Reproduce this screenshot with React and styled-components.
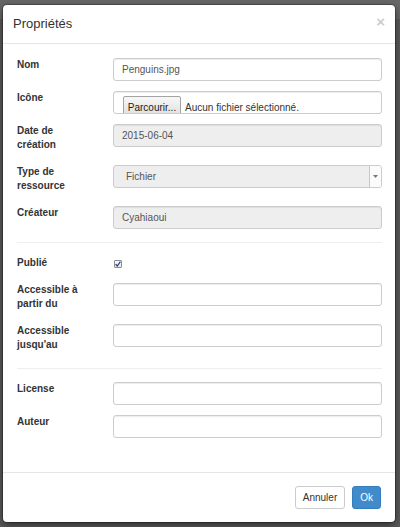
import React, { useState } from "react";
import styled, { createGlobalStyle } from "styled-components";

const GlobalStyle = createGlobalStyle`
  html, body {
    margin: 0;
    padding: 0;
  }
  body {
    background: #5a5a5a;
    font-family: "Liberation Sans", Arial, Helvetica, sans-serif;
  }
  * {
    box-sizing: border-box;
  }
`;

const Backdrop = styled.div`
  min-height: 527px;
  padding: 5px 0 0 3px;
  background: linear-gradient(#676767 0, #676767 19px, #5a5a5a 19px);
`;

const Modal = styled.div`
  width: 392px;
  background: #fff;
  border-radius: 4px;
  box-shadow: 0 0 0 1px rgba(0, 0, 0, 0.25), 0 3px 9px rgba(0, 0, 0, 0.5);
`;

const Header = styled.div`
  height: 39px;
  display: flex;
  align-items: center;
  justify-content: space-between;
  padding: 0 10px 0 10px;
  border-bottom: 1px solid #e5e5e5;
`;

const Title = styled.h4`
  margin: 0;
  font-size: 13px;
  font-weight: normal;
  line-height: 14px;
  color: #333;
`;

const Close = styled.button`
  margin-bottom: 6px;
  padding: 0;
  border: 0;
  background: none;
  font-family: inherit;
  font-size: 15px;
  font-weight: bold;
  line-height: 1;
  color: #000;
  opacity: 0.2;
  cursor: pointer;
`;

const Body = styled.div`
  padding: 14px 13px 34px 14px;
`;

const Section = styled.div`
  display: flex;
  flex-direction: column;
  gap: 10px;
`;

const Divider = styled.hr`
  margin: 13px 0;
  border: 0;
  border-top: 1px solid #eee;
`;

const Row = styled.div`
  display: grid;
  grid-template-columns: 96px 1fr;
  align-items: start;
`;

const Label = styled.label`
  font-size: 10px;
  font-weight: bold;
  line-height: 14px;
  padding-bottom: 3px;
  color: #333;
`;

const Input = styled.input`
  display: block;
  width: 100%;
  height: 23px;
  margin: 0;
  padding: 0 8px;
  font-family: inherit;
  font-size: 10px;
  color: #555;
  background: ${(p) => (p.disabled ? "#eee" : "#fff")};
  border: 1px solid #ccc;
  border-radius: 3px;
  box-shadow: inset 0 1px 1px rgba(0, 0, 0, 0.075);
  outline: none;
`;

const FileControl = styled.div`
  height: 23px;
  display: flex;
  align-items: flex-start;
  gap: 4px;
  padding: 4px 0 0 9px;
  overflow: hidden;
  border: 1px solid #ccc;
  border-radius: 3px;
  box-shadow: inset 0 1px 1px rgba(0, 0, 0, 0.075);
`;

const FileButton = styled.span`
  flex: 0 0 58px;
  height: 22px;
  padding-top: 5px;
  text-align: center;
  font-size: 10px;
  line-height: 12px;
  color: #222;
  background: linear-gradient(#f7f7f7, #dedede);
  border: 1px solid #a3a3a3;
  border-radius: 2px;
`;

const FileName = styled.span`
  padding-top: 6px;
  font-size: 10px;
  line-height: 12px;
  color: #333;
`;

const SelectBox = styled.div`
  height: 23px;
  display: flex;
  align-items: center;
  padding-left: 12px;
  font-size: 10px;
  color: #555;
  background: #eee;
  border: 1px solid #ccc;
  border-radius: 3px;
  overflow: hidden;
`;

const SelectArrow = styled.span`
  margin-left: auto;
  width: 12px;
  height: 100%;
  display: flex;
  align-items: center;
  justify-content: center;
  background: #fbfbfb;
  border-left: 1px solid #c8c8c8;
`;

const CheckWrap = styled.div`
  padding: 4px 0 0 1px;
`;

const CheckBox = styled.span`
  display: flex;
  align-items: center;
  justify-content: center;
  width: 8px;
  height: 8px;
  background: linear-gradient(#fdfdfd, #e4e4e4);
  border: 1px solid #8e8e8e;
  border-radius: 1px;
  cursor: pointer;
`;

const Footer = styled.div`
  display: flex;
  justify-content: flex-end;
  gap: 7px;
  padding: 13px 14px 13px;
  border-top: 1px solid #e5e5e5;
`;

const Button = styled.button`
  height: 23px;
  padding: 0 7px;
  font-family: inherit;
  font-size: 10px;
  border-radius: 3px;
  cursor: pointer;
  color: ${(p) => (p.primary ? "#fff" : "#333")};
  background: ${(p) => (p.primary ? "#428bca" : "#fff")};
  border: 1px solid ${(p) => (p.primary ? "#357ebd" : "#ccc")};
`;

const PropertiesModal = () => {
  const [name, setName] = useState("Penguins.jpg");
  const [published, setPublished] = useState(true);
  const [from, setFrom] = useState("");
  const [until, setUntil] = useState("");
  const [license, setLicense] = useState("");
  const [author, setAuthor] = useState("");

  return (
    <Modal>
      <Header>
        <Title>Propriétés</Title>
        <Close type="button">×</Close>
      </Header>
      <Body>
        <Section>
          <Row>
            <Label htmlFor="nom">Nom</Label>
            <Input id="nom" value={name} onChange={(e) => setName(e.target.value)} />
          </Row>
          <Row>
            <Label>Icône</Label>
            <FileControl>
              <FileButton>Parcourir...</FileButton>
              <FileName>Aucun fichier sélectionné.</FileName>
            </FileControl>
          </Row>
          <Row>
            <Label>
              Date de
              <br />
              création
            </Label>
            <Input value="2015-06-04" disabled readOnly />
          </Row>
          <Row>
            <Label>
              Type de
              <br />
              ressource
            </Label>
            <SelectBox>
              Fichier
              <SelectArrow>
                <svg width="5" height="3" viewBox="0 0 5 3">
                  <path d="M0 0h5L2.5 3z" fill="#777" />
                </svg>
              </SelectArrow>
            </SelectBox>
          </Row>
          <Row>
            <Label>Créateur</Label>
            <Input value="Cyahiaoui" disabled readOnly />
          </Row>
        </Section>
        <Divider />
        <Section>
          <Row>
            <Label>Publié</Label>
            <CheckWrap>
              <CheckBox onClick={() => setPublished(!published)}>
                {published && (
                  <svg width="6" height="6" viewBox="0 0 6 6">
                    <path d="M0.6 3.2L2.2 5L5.4 0.6" fill="none" stroke="#1f3f8f" strokeWidth="1.2" />
                  </svg>
                )}
              </CheckBox>
            </CheckWrap>
          </Row>
          <Row>
            <Label>
              Accessible à
              <br />
              partir du
            </Label>
            <Input value={from} onChange={(e) => setFrom(e.target.value)} />
          </Row>
          <Row>
            <Label>
              Accessible
              <br />
              jusqu'au
            </Label>
            <Input value={until} onChange={(e) => setUntil(e.target.value)} />
          </Row>
        </Section>
        <Divider />
        <Section>
          <Row>
            <Label>License</Label>
            <Input value={license} onChange={(e) => setLicense(e.target.value)} />
          </Row>
          <Row>
            <Label>Auteur</Label>
            <Input value={author} onChange={(e) => setAuthor(e.target.value)} />
          </Row>
        </Section>
      </Body>
      <Footer>
        <Button type="button">Annuler</Button>
        <Button type="button" primary>
          Ok
        </Button>
      </Footer>
    </Modal>
  );
};

const App = () => (
  <>
    <GlobalStyle />
    <Backdrop>
      <PropertiesModal />
    </Backdrop>
  </>
);

export default App;
